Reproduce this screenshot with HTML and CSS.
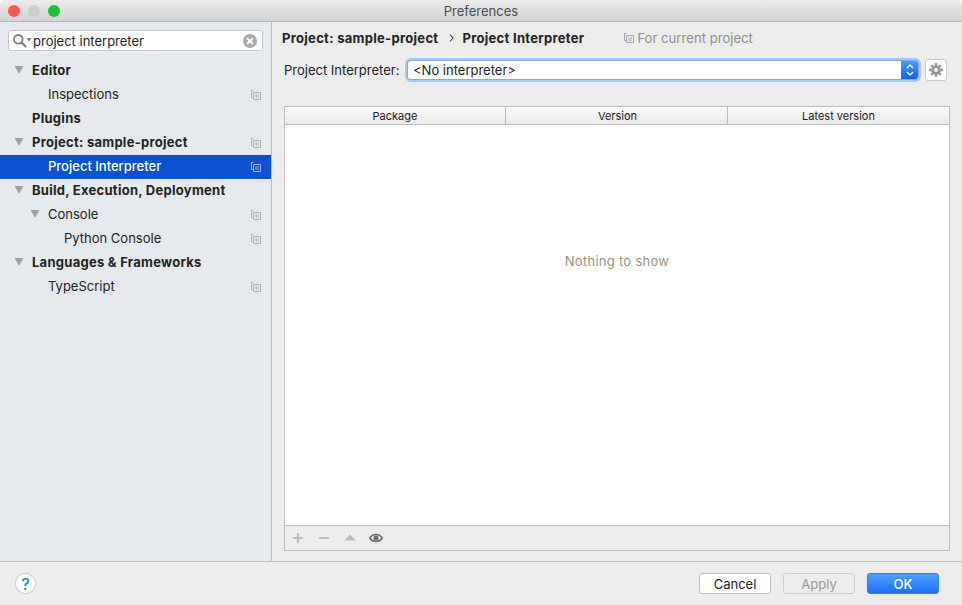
FILE: index.html
```html
<!doctype html>
<html>
	<head>
		<title>Preferences</title>
		<meta charset="utf8">
		<link rel="stylesheet" href="styles.css">
	</head>
	<body>
		<svg width="0" height="0" class="defs">
			<symbol id="copy" viewBox="0 0 10 10">
				<path d="M2.5 .5H.5V7.5H2.5M2.5 2.5H9.5V9.5H2.5ZM4 5H8M4 7H8" fill="none" stroke="currentColor"/>
			</symbol>
			<symbol id="arrow" viewBox="0 0 10 8">
				<polygon points="0.5,0 9.5,0 5,8" fill="#a0a3a5"/>
			</symbol>
		</svg>
		<header class="titlebar">
			<div class="lights">
				<span class="light red"></span>
				<span class="light grey"></span>
				<span class="light green"></span>
			</div>
			<span class="title">Preferences</span>
		</header>
		<div class="main">
			<aside class="sidebar">
				<div class="search">
					<svg class="search-icon" width="19" height="14" viewBox="0 0 19 14">
						<circle cx="5.3" cy="5.3" r="4.3" fill="none" stroke="#808080" stroke-width="1.8"/>
						<line x1="8.5" y1="8.5" x2="13" y2="13" stroke="#808080" stroke-width="2.4"/>
						<polygon points="13.5,4 18.5,4 16,7.5" fill="#808080"/>
					</svg>
					<span class="search-text">project interpreter</span>
					<svg class="search-clear" width="14" height="14" viewBox="0 0 14 14">
						<circle cx="7" cy="7" r="7" fill="#aaa"/>
						<path d="M4.2 4.2L9.8 9.8M9.8 4.2L4.2 9.8" stroke="#fff" stroke-width="2"/>
					</svg>
				</div>
				<ul class="tree">
					<li class="row bold"><svg class="arrow"><use href="#arrow"/></svg><span>Editor</span></li>
					<li class="row lvl1"><span>Inspections</span><svg class="copy"><use href="#copy"/></svg></li>
					<li class="row bold"><span>Plugins</span></li>
					<li class="row bold"><svg class="arrow"><use href="#arrow"/></svg><span>Project: sample-project</span><svg class="copy"><use href="#copy"/></svg></li>
					<li class="row lvl1 selected"><span>Project Interpreter</span><svg class="copy"><use href="#copy"/></svg></li>
					<li class="row bold"><svg class="arrow"><use href="#arrow"/></svg><span>Build, Execution, Deployment</span></li>
					<li class="row lvl1"><svg class="arrow"><use href="#arrow"/></svg><span>Console</span><svg class="copy"><use href="#copy"/></svg></li>
					<li class="row lvl2"><span>Python Console</span><svg class="copy"><use href="#copy"/></svg></li>
					<li class="row bold"><svg class="arrow"><use href="#arrow"/></svg><span>Languages &amp; Frameworks</span></li>
					<li class="row lvl1"><span>TypeScript</span><svg class="copy"><use href="#copy"/></svg></li>
				</ul>
			</aside>
			<section class="content">
				<div class="crumbs">
					<strong>Project: sample-project</strong>
					<svg class="crumb-sep" width="5" height="8" viewBox="0 0 5 8"><path d="M1 .5L4 4L1 7.5" fill="none" stroke="#444" stroke-width="1.1"/></svg>
					<strong>Project Interpreter</strong>
					<span class="scope"><svg class="copy"><use href="#copy"/></svg>For current project</span>
				</div>
				<div class="interp">
					<label>Project Interpreter:</label>
					<div class="select">
						<span class="select-text">&lt;No interpreter&gt;</span>
						<span class="select-btn">
							<svg width="8" height="14" viewBox="0 0 8 14"><path d="M1 5L4 2L7 5M1 9L4 12L7 9" fill="none" stroke="#fff" stroke-width="1.4"/></svg>
						</span>
					</div>
					<button class="gear">
						<svg width="14" height="14" viewBox="0 0 14 14">
							<circle cx="7" cy="7" r="3.4" fill="none" stroke="#95989a" stroke-width="3"/>
							<path d="M7 0V14M0 7H14M2.2 2.2L11.8 11.8M11.8 2.2L2.2 11.8" stroke="#95989a" stroke-width="2.4" stroke-dasharray="2.4 9.2 2.4"/>
						</svg>
					</button>
				</div>
				<div class="table">
					<div class="thead">
						<div>Package</div>
						<div class="col-version">Version</div>
						<div>Latest version</div>
					</div>
					<div class="tbody">Nothing to show</div>
					<div class="toolbar">
						<svg width="12" height="12" viewBox="0 0 12 12"><path d="M6 1V11M1 6H11" stroke="#bdbdbd" stroke-width="2"/></svg>
						<svg width="12" height="12" viewBox="0 0 12 12"><path d="M1 6H11" stroke="#bdbdbd" stroke-width="2"/></svg>
						<svg width="12" height="12" viewBox="0 0 12 12"><polygon points="6,2.5 12,8.5 0,8.5" fill="#bdbdbd"/></svg>
						<svg class="eye" width="14" height="12" viewBox="0 0 14 12"><path d="M.8 6C3.5 1.4 10.5 1.4 13.2 6C10.5 10.6 3.5 10.6 .8 6Z" fill="none" stroke="#6e6e6e" stroke-width="1.6"/><circle cx="7" cy="6" r="2.6" fill="#6e6e6e"/></svg>
					</div>
				</div>
			</section>
		</div>
		<footer class="footer">
			<button class="help">?</button>
			<div class="actions">
				<button class="btn">Cancel</button>
				<button class="btn disabled">Apply</button>
				<button class="btn primary">OK</button>
			</div>
		</footer>
	</body>
</html>
```

FILE: styles.css
```css
html, body {
	margin: 0;
	padding: 0;
	height: 100%;
}
body {
	width: 962px;
	height: 605px;
	overflow: hidden;
	display: flex;
	flex-direction: column;
	background: #fff;
	color: #222;
	font-family: "Inter", "Liberation Sans", sans-serif;
	font-size: 13px;
}
button {
	font-family: inherit;
	font-size: 13px;
	padding: 0;
}
.defs {
	display: none;
}

/* title bar */
.titlebar {
	height: 21px;
	flex: none;
	position: relative;
	display: flex;
	align-items: center;
	justify-content: center;
	background: linear-gradient(#ebebeb, #d3d3d3);
	border-bottom: 1px solid #b4b4b4;
	border-radius: 5px 5px 0 0;
}
.title {
	color: #4c4c4c;
}
.lights {
	position: absolute;
	left: 8px;
	top: 5px;
	display: flex;
	gap: 8px;
}
.light {
	width: 12px;
	height: 12px;
	border-radius: 50%;
}
.red { background: #fc5753; }
.grey { background: #cdcdcd; }
.green { background: #1fc133; }

/* layout */
.main {
	flex: 1;
	display: flex;
	min-height: 0;
	background: #ececec;
}
.sidebar {
	width: 271px;
	flex: none;
	background: #e5e9ed;
	border-right: 1px solid #bdbdbd;
	padding-top: 8px;
	box-sizing: content-box;
}
.content {
	flex: 1;
	display: flex;
	flex-direction: column;
	padding: 0 12px 10px 12px;
	min-width: 0;
}

/* search */
.search {
	height: 19px;
	margin: 0 8px;
	display: flex;
	align-items: center;
	background: #fff;
	border: 1px solid #c4c6c8;
	border-radius: 3px;
}
.search-icon {
	margin-left: 4px;
	flex: none;
}
.search-text {
	flex: 1;
	margin-left: 1px;
}
.search-clear {
	margin-right: 5px;
}

/* tree */
.tree {
	list-style: none;
	margin: 8px 0 0 0;
	padding: 0;
}
.row {
	height: 24px;
	box-sizing: border-box;
	padding-bottom: 2px;
	display: flex;
	align-items: center;
	position: relative;
	padding-left: 32px;
}
.row.bold {
	font-weight: 700;
	letter-spacing: .27px;
}
.row.lvl1 {
	padding-left: 48px;
}
.row.lvl2 {
	padding-left: 64px;
}
.row.selected {
	background: #0a52cf;
	color: #fff;
	font-weight: 500;
}
.arrow {
	position: absolute;
	width: 10px;
	height: 8px;
	margin-left: -18.5px;
}
.row .copy {
	position: absolute;
	right: 10px;
	top: 7px;
	color: #b0b6ba;
}
.row.selected .copy {
	color: #98b0d8;
}
.copy {
	width: 10px;
	height: 10px;
}

/* breadcrumbs */
.crumbs {
	height: 32px;
	display: flex;
	align-items: center;
	margin-left: -2px;
}
.crumbs strong {
	letter-spacing: .3px;
}
.crumb-sep {
	margin: 0 8px 0 11px;
}
.scope {
	margin-left: 40px;
	color: #8e8e8e;
	letter-spacing: .06px;
	display: flex;
	align-items: center;
	gap: 3px;
}
.scope .copy {
	color: #a6a6a6;
}

/* interpreter chooser */
.interp {
	height: 22px;
	margin-top: 5px;
	display: flex;
	align-items: center;
}
.interp label {
	width: 124px;
	flex: none;
}
.select {
	flex: 1;
	height: 18px;
	display: flex;
	align-items: center;
	justify-content: space-between;
	background: #fff;
	border-radius: 3px;
	box-shadow: 0 0 0 1px #7eaeec, 0 0 0 3px #a8c8f2;
}
.select-text {
	padding-left: 5px;
}
.select-btn {
	width: 17px;
	height: 100%;
	display: flex;
	align-items: center;
	justify-content: center;
	background: linear-gradient(#4a9bfb, #1261e8);
	border-radius: 0 3px 3px 0;
}
.gear {
	width: 22px;
	height: 22px;
	margin: 0 3px 0 7px;
	display: flex;
	align-items: center;
	justify-content: center;
	background: #fff;
	border: 1px solid #c9c9c9;
	border-radius: 3px;
}

/* packages table */
.table {
	flex: 1;
	margin-top: 25px;
	display: flex;
	flex-direction: column;
	border: 1px solid #bdbdbd;
	min-height: 0;
}
.thead {
	height: 17px;
	flex: none;
	display: grid;
	grid-template-columns: 220px 222px 1fr;
	font-size: 11px;
	background: linear-gradient(#fbfbfb, #e8e8e8);
	border-bottom: 1px solid #bdbdbd;
}
.thead div {
	display: flex;
	align-items: center;
	justify-content: center;
	border-left: 1px solid #bdbdbd;
}
.thead div:first-child {
	border-left: 0;
}
.thead .col-version {
	padding-left: 2px;
}
.tbody {
	flex: 1;
	display: flex;
	justify-content: center;
	background: #fff;
	color: #9b9287;
	letter-spacing: .28px;
	padding-top: 128px;
}
.toolbar {
	height: 24px;
	flex: none;
	display: flex;
	align-items: center;
	gap: 14px;
	padding-left: 7px;
	border-top: 1px solid #bdbdbd;
	background: #ececec;
}
.eye {
	margin-left: -1px;
}

/* footer */
.footer {
	height: 43px;
	flex: none;
	display: flex;
	align-items: center;
	justify-content: space-between;
	padding: 0 23px 0 15px;
	border-top: 1px solid #bdbdbd;
	background: #ececec;
}
.help {
	width: 21px;
	height: 21px;
	border-radius: 50%;
	background: #fff;
	border: 1px solid #c6c6c6;
	color: #1b7cf2;
	font-size: 16px;
	font-weight: 500;
}
.actions {
	display: flex;
	gap: 12px;
}
.btn {
	width: 72px;
	height: 21px;
	background: #fff;
	border: 1px solid #bcbcbc;
	border-radius: 3px;
	color: #222;
}
.btn.disabled {
	background: #ececec;
	border-color: #cdcdcd;
	color: #9a9a9a;
}
.btn.primary {
	background: linear-gradient(#4fa0fb, #1a70f5);
	border-color: #2e80f0;
	color: #fff;
	font-weight: 500;
}
```
